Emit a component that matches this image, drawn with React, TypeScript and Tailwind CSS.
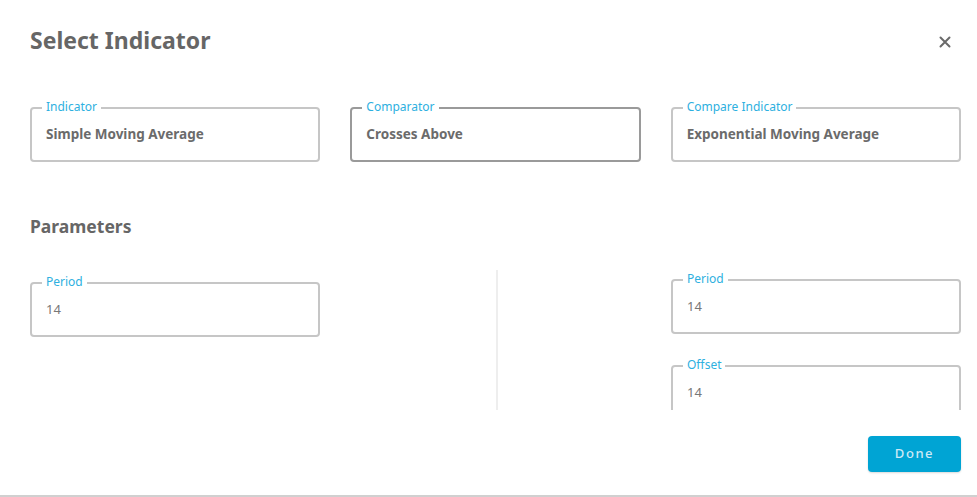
import React from "react";

function Field({ label, value, bold, dark, className }: { label: string; value: string; bold?: boolean; dark?: boolean; className?: string }) {
  return (
    <div
      className={`relative shrink-0 h-[55px] rounded-[4px] border-2 ${dark ? "border-[#9a9a9a]" : "border-[#c6c6c6]"} flex items-center pl-[14px] ${className ?? ""}`}
    >
      <span className="absolute -top-[10px] left-[10px] bg-white px-[4px] text-[12px] leading-[16px] text-[#2eb0e0]">
        {label}
      </span>
      <span className={`${bold ? "text-[13.5px] font-bold text-[#6b6b6b]" : "text-[13px] text-[#777]"}`}>{value}</span>
    </div>
  );
}

export default function App() {
  return (
    <div
      className="w-[977px] h-[497px] bg-white border-b-2 border-[#d0d0d0] overflow-hidden flex flex-col"
      style={{ fontFamily: "'Noto Sans', Lato, sans-serif" }}
    >
      <div className="flex items-center justify-between pl-[30px] pr-[26px] pt-[22px] h-[58px]">
        <h1 className="text-[23px] font-bold text-[#666] leading-[32px]">Select Indicator</h1>
        <svg width="12" height="12" viewBox="0 0 12 12" className="mt-[4px]">
          <path d="M1.5 1.5 L10.5 10.5 M10.5 1.5 L1.5 10.5" stroke="#6a6a6a" strokeWidth="2" strokeLinecap="round" />
        </svg>
      </div>
      <div className="grid grid-cols-3 gap-x-[30px] w-[931px] ml-[30px] mt-[49px]">
        <Field label="Indicator" value="Simple Moving Average" bold />
        <Field label="Comparator" value="Crosses Above" bold dark />
        <Field label="Compare Indicator" value="Exponential Moving Average" bold />
      </div>
      <h2 className="ml-[30px] mt-[52px] text-[17.5px] font-bold text-[#666] leading-[24px]">Parameters</h2>
      <div className="flex ml-[30px] mt-[32px] h-[140px] overflow-hidden w-[931px] shrink-0">
        <div className="w-[290px] pt-[12px]">
          <Field label="Period" value="14" />
        </div>
        <div className="w-[2px] bg-[#eeeeee] ml-[176px]" />
        <div className="w-[290px] ml-[173px] pt-[9px] flex flex-col gap-[31px]">
          <Field label="Period" value="14" />
          <Field label="Offset" value="14" />
        </div>
      </div>
      <div className="flex justify-end w-[961px] mt-[26px]">
        <button className="w-[93px] h-[36px] rounded-[4px] bg-[#00a4d4] text-[13px] tracking-[0.12em] text-[#cdeaf6] font-medium shadow-[0_1px_2px_rgba(0,0,0,0.15)]">
          Done
        </button>
      </div>
    </div>
  );
}
